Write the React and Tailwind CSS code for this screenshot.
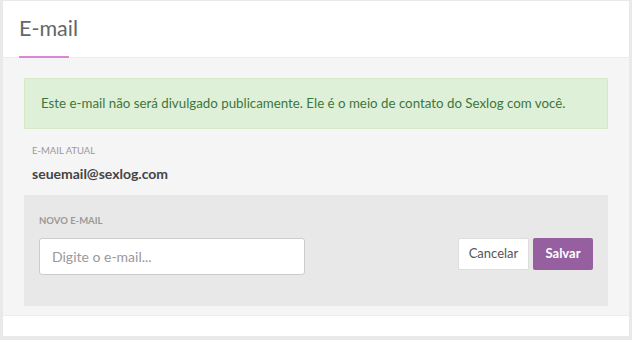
export default function App() {
  return (
    <div className="h-[340px] w-[632px] bg-[#e9e9e9] pl-[3px] pr-[3px] pt-px font-['Lato',sans-serif]">
      <div className="flex h-[335px] flex-col bg-white">
        <div className="relative h-[57px] border-b border-[#ececec] px-4">
          <h1 className="pt-[13px] text-[21.5px] leading-[28px] text-[#666]">E-mail</h1>
          <div className="absolute bottom-[-1px] left-4 h-[2px] w-[50px] bg-[#df85d6]" />
        </div>
        <div className="h-[258px] border-b border-[#ececec] bg-[#f5f5f5] px-[21px] pt-5">
          <div className="flex h-[51px] items-center border border-[#d6e9c6] bg-[#dff0d8] px-4 text-[13.3px] text-[#3c763d]">
            Este e-mail não será divulgado publicamente. Ele é o meio de contato do Sexlog com você.
          </div>
          <div className="px-2 pt-[16px]">
            <div className="text-[9.5px] uppercase leading-[12px] text-[#999]">E-mail atual</div>
            <div className="pt-[9px] text-[14px] font-bold leading-[16px] text-[#444]">seuemail@sexlog.com</div>
          </div>
          <div className="mt-[13px] h-[111px] bg-[#e8e8e8] px-[15px] pt-[20px]">
            <div className="text-[9.5px] font-bold uppercase leading-[12px] text-[#999]">Novo e-mail</div>
            <div className="mt-[11px] flex items-start justify-between">
              <input
                className="h-[37px] w-[266px] rounded-[3px] border border-[#ccc] bg-white px-3 text-[14px] text-[#555] placeholder:text-[#999] outline-none"
                placeholder="Digite o e-mail..."
              />
              <div className="flex gap-1">
                <button className="h-[32px] w-[71px] rounded-[2px] border border-[#ddd] bg-white text-[13px] text-[#555]">Cancelar</button>
                <button className="h-[32px] w-[60px] rounded-[2px] bg-[#955fa0] text-[13px] font-bold text-white">Salvar</button>
              </div>
            </div>
          </div>
        </div>
        <div className="flex-1" />
      </div>
    </div>
  );
}
